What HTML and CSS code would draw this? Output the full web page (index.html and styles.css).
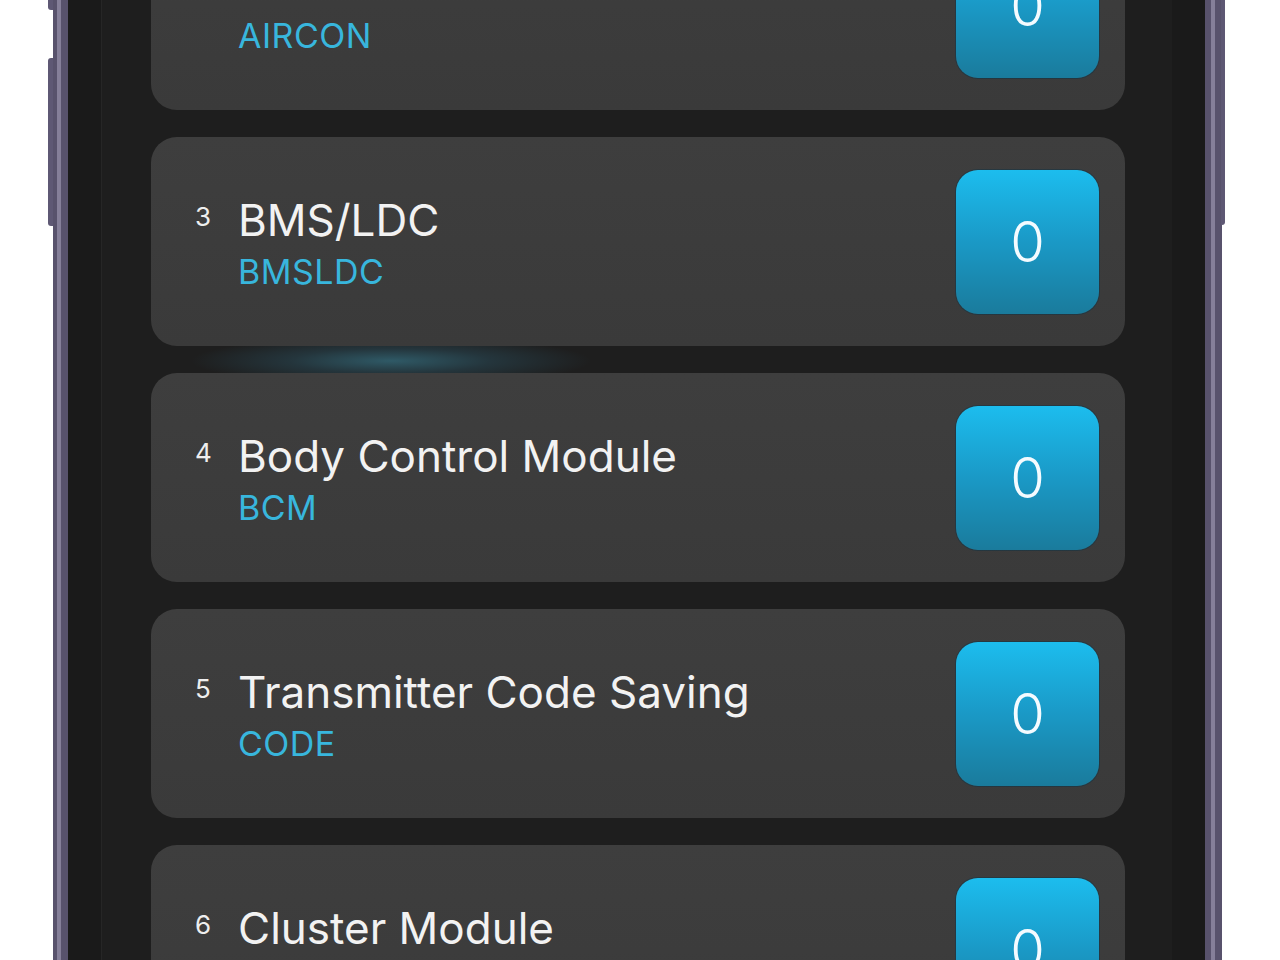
FILE: index.html
```html
<!DOCTYPE html>
<html lang="en">
<head>
    <meta charset="UTF-8">
    <meta name="viewport" content="width=device-width, initial-scale=1.0">
    <title>Modules</title>
    <link rel="stylesheet" href="styles.css">
</head>
<body>
    <div class="phone">
        <span class="side-btn left-top"></span>
        <span class="side-btn left-main"></span>
        <span class="side-btn right-main"></span>
        <div class="bezel">
            <div class="display">
                <ul class="module-list">
                    <li class="module">
                        <div class="info">
                            <span class="num">2</span>
                            <div class="names">
                                <div class="title">Air Conditioner</div>
                                <div class="code">AIRCON</div>
                            </div>
                        </div>
                        <div class="count">0</div>
                    </li>
                    <li class="module">
                        <div class="info">
                            <span class="num">3</span>
                            <div class="names">
                                <div class="title">BMS/LDC</div>
                                <div class="code">BMSLDC</div>
                            </div>
                        </div>
                        <div class="count">0</div>
                    </li>
                    <li class="module glow">
                        <div class="info">
                            <span class="num">4</span>
                            <div class="names">
                                <div class="title">Body Control Module</div>
                                <div class="code">BCM</div>
                            </div>
                        </div>
                        <div class="count">0</div>
                    </li>
                    <li class="module">
                        <div class="info">
                            <span class="num">5</span>
                            <div class="names">
                                <div class="title">Transmitter Code Saving</div>
                                <div class="code">CODE</div>
                            </div>
                        </div>
                        <div class="count">0</div>
                    </li>
                    <li class="module">
                        <div class="info">
                            <span class="num">6</span>
                            <div class="names">
                                <div class="title">Cluster Module</div>
                                <div class="code">CLU</div>
                            </div>
                        </div>
                        <div class="count">0</div>
                    </li>
                </ul>
            </div>
        </div>
    </div>
</body>
</html>
```

FILE: styles.css
```css
html, body {
    margin: 0;
    padding: 0;
    background: #ffffff;
    height: 960px;
    overflow: hidden;
}
body {
    font-family: Inter, "Liberation Sans", Arial, sans-serif;
    padding-left: 53px;
}
.phone {
    position: relative;
    width: 1137px;
    height: 960px;
    border-left: 15px solid #58526c;
    border-right: 17px solid #58526c;
    background: #1b1b1b;
}
.phone::before,
.phone::after {
    content: "";
    position: absolute;
    top: 0;
    bottom: 0;
    width: 4px;
    background: #857f99;
}
.phone::before {
    left: -11px;
}
.phone::after {
    right: -10px;
}
.side-btn {
    position: absolute;
    background: #5e5874;
}
.left-top {
    left: -20px;
    top: -4px;
    width: 5px;
    height: 14px;
    border-radius: 0 0 0 3px;
}
.left-main {
    left: -20px;
    top: 58px;
    width: 5px;
    height: 168px;
    border-radius: 3px 0 0 3px;
}
.right-main {
    right: -20px;
    top: -4px;
    width: 4px;
    height: 229px;
    border-radius: 0 0 3px 0;
}
.bezel {
    height: 100%;
    padding: 0 33px 0 34px;
    background: #1a1a1a;
}
.display {
    height: 100%;
    overflow: hidden;
    padding: 0 47px 0 49px;
    background: #1e1e1e;
    box-shadow: -1px 0 0 #262626;
}
.module-list {
    list-style: none;
    margin: -99px 0 0;
    padding: 0;
    display: flex;
    flex-direction: column;
    gap: 27px;
}
.module {
    position: relative;
    flex: none;
    height: 209px;
    box-sizing: border-box;
    padding: 0 26px 0 44px;
    display: flex;
    align-items: center;
    justify-content: space-between;
    border-radius: 26px;
    background: linear-gradient(180deg, #3e3e3e, #3a3a3a);
}
.glow::before {
    content: "";
    position: absolute;
    left: 40px;
    top: -27px;
    width: 400px;
    height: 27px;
    background: radial-gradient(50% 90% at 50% 55%, rgba(50, 100, 115, 0.85), rgba(42, 76, 90, 0.5) 50%, rgba(30, 30, 30, 0) 100%);
}
.info {
    display: flex;
    align-items: flex-start;
    margin-top: 2px;
}
.num {
    width: 43px;
    margin-top: 7px;
    font-size: 26px;
    line-height: 32px;
    color: #eeeeee;
}
.title {
    font-size: 44px;
    line-height: 52px;
    color: #f2f2f2;
}
.code {
    margin-top: 6px;
    font-size: 34px;
    line-height: 40px;
    color: #38b6dd;
    letter-spacing: 0.5px;
}
.count {
    width: 143px;
    height: 144px;
    display: flex;
    align-items: center;
    justify-content: center;
    border-radius: 22px;
    background: linear-gradient(180deg, #1cbdee, #1a99c6 50%, #1a7b9c);
    box-shadow: 0 0 0 1px rgba(10, 50, 70, 0.45);
    color: #f4fbff;
    font-size: 56px;
    font-weight: 300;
}
```
